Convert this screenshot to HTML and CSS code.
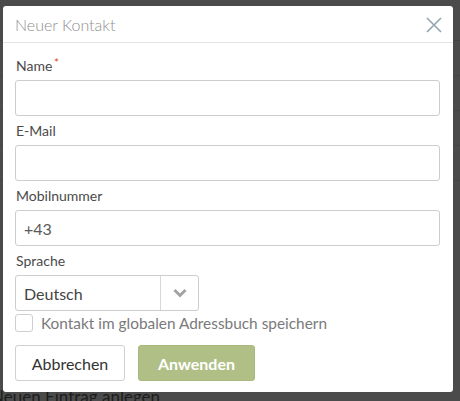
FILE: index.html
```html
<!DOCTYPE html>
<html lang="de">
<head>
<meta charset="utf-8">
<title>Neuer Kontakt</title>
<link rel="stylesheet" href="styles.css">
</head>
<body>
  <div class="page">
    <div class="page-row"></div>
    <div class="page-row"></div>
    <div class="page-row"></div>
    <div class="page-row"></div>
    <div class="page-row"></div>
    <p class="page-link">Neuen Eintrag anlegen</p>
  </div>

  <div class="modal">
    <div class="modal-header">
      <h1 class="modal-title">Neuer Kontakt</h1>
      <button class="close" type="button" aria-label="Schließen">
        <svg width="16" height="16" viewBox="0 0 16 16"><path d="M1 1 L15 15 M15 1 L1 15" stroke="#93a5b0" stroke-width="1.6" fill="none"/></svg>
      </button>
    </div>
    <div class="modal-body">
      <div class="field">
        <label class="field-label">Name<span class="req">*</span></label>
        <input class="input" type="text">
      </div>
      <div class="field">
        <label class="field-label">E-Mail</label>
        <input class="input" type="text">
      </div>
      <div class="field">
        <label class="field-label">Mobilnummer</label>
        <input class="input" type="text" value="+43">
      </div>
      <div class="field">
        <label class="field-label">Sprache</label>
        <div class="select">
          <span class="select-value">Deutsch</span>
          <span class="select-arrow">
            <svg width="14" height="10" viewBox="0 0 14 10"><path d="M1.5 2 L7 7.5 L12.5 2" stroke="#a3a3a3" stroke-width="3" fill="none"/></svg>
          </span>
        </div>
      </div>
      <label class="check">
        <span class="checkbox"></span>
        <span class="check-text">Kontakt im globalen Adressbuch speichern</span>
      </label>
      <div class="actions">
        <button class="btn btn-default" type="button">Abbrechen</button>
        <button class="btn btn-primary" type="button">Anwenden</button>
      </div>
    </div>
  </div>
</body>
</html>
```

FILE: styles.css
```css
html, body {
  margin: 0;
  padding: 0;
}

body {
  width: 460px;
  height: 401px;
  overflow: hidden;
  background: #4b4b4b;
  font-family: Lato, "Open Sans", sans-serif;
  position: relative;
}

/* dimmed page behind the dialog */
.page {
  display: flex;
  flex-direction: column;
}

.page-row {
  height: 34px;
  border-bottom: 1px solid #444;
}

.page-row:first-child {
  height: 40px;
}

.page-link {
  margin: 206px 0 0 -9px;
  font-size: 17px;
  color: #1c1c1c;
  line-height: 20px;
}

/* dialog */
.modal {
  position: absolute;
  left: 3px;
  top: 6px;
  width: 450px;
  background: #fff;
  border-radius: 3px;
  box-sizing: border-box;
}

.modal-header {
  height: 36px;
  border-bottom: 1px solid #e3e3e3;
  display: flex;
  align-items: center;
  justify-content: space-between;
  padding: 0 11px 0 12px;
}

.modal-title {
  margin: 0;
  font-size: 16px;
  font-weight: 300;
  color: #8f8f8f;
}

.close {
  border: 0;
  background: none;
  padding: 0;
  display: flex;
  margin-top: 2px;
}

.modal-body {
  padding: 8px 13px 11px 12px;
}

.field {
  display: flex;
  flex-direction: column;
  padding-top: 5px;
}

.field-label {
  font-size: 14px;
  line-height: 19px;
  color: #4a4a4a;
  padding-left: 1px;
  margin-bottom: 5px;
}

.req {
  color: #e0401c;
  margin-left: 2px;
  font-size: 11px;
  vertical-align: top;
  line-height: 14px;
}

.input {
  height: 36px;
  box-sizing: border-box;
  border: 1px solid #cdcdcd;
  border-radius: 3px;
  padding: 0 8px;
  font-family: inherit;
  font-size: 16px;
  color: #5a5a5a;
  outline: none;
}

.select {
  width: 184px;
  height: 36px;
  box-sizing: border-box;
  border: 1px solid #cdcdcd;
  border-radius: 3px;
  display: flex;
  align-items: stretch;
}

.select-value {
  flex: 1;
  display: flex;
  align-items: center;
  padding-left: 8px;
  font-size: 16px;
  color: #444;
}

.select-arrow {
  width: 37px;
  border-left: 1px solid #d8d8d8;
  display: flex;
  align-items: center;
  justify-content: center;
}

.check {
  display: flex;
  align-items: center;
  gap: 8px;
  margin-top: 3px;
}

.checkbox {
  width: 18px;
  height: 18px;
  box-sizing: border-box;
  border: 1px solid #cfcfcf;
  border-radius: 3px;
}

.check-text {
  font-size: 15.4px;
  color: #7a7a7a;
}

.actions {
  display: flex;
  gap: 13px;
  margin-top: 13px;
}

.btn {
  height: 36px;
  border-radius: 3px;
  font-family: inherit;
  font-size: 16px;
  padding: 0;
}

.btn-default {
  width: 110px;
  background: #fff;
  border: 1px solid #d0d0d0;
  color: #333;
}

.btn-primary {
  width: 117px;
  background: #b0bf86;
  border: 1px solid #a9b97e;
  color: #fff;
  font-weight: 700;
}
```
